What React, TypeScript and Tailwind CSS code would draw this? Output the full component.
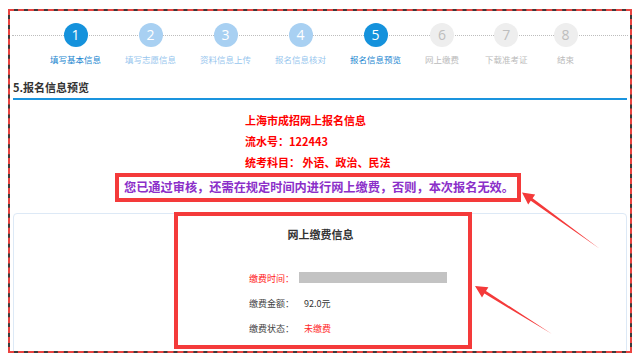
import React from "react";

const steps = [
  { n: "1", label: "填写基本信息", state: "active" },
  { n: "2", label: "填写志愿信息", state: "done" },
  { n: "3", label: "资料信息上传", state: "done" },
  { n: "4", label: "报名信息核对", state: "done" },
  { n: "5", label: "报名信息预览", state: "active" },
  { n: "6", label: "网上缴费", state: "todo" },
  { n: "7", label: "下载准考证", state: "todo" },
  { n: "8", label: "结束", state: "todo" },
];

const circleCls: Record<string, string> = {
  active: "bg-[#1592dc] text-white",
  done: "bg-[#a8d0f2] text-white",
  todo: "bg-[#eeeeee] text-[#bdbdbd]",
};
const labelCls: Record<string, string> = {
  active: "text-[#1a86d0]",
  done: "text-[#97c6ee]",
  todo: "text-[#bbbbbb]",
};

export default function App() {
  const cjk = { fontFamily: '"Noto Sans CJK SC", "Noto Sans", sans-serif' };
  return (
    <div className="relative w-[640px] h-[359px] bg-white overflow-hidden pt-[9px] pl-[8px]" style={cjk}>
      <div className="w-[624px] h-[344px] border-2 border-dashed border-[#ea4340] bg-[#3c3c3c]">
        <div className="h-full bg-white overflow-hidden px-[3px]">
          {/* stepper */}
          <div className="relative pt-[12px]">
            <div className="absolute top-[24px] left-[-1px] right-[-1px] border-t border-dotted border-[#bdbdbd]" />
            <div className="relative flex gap-[24px] pl-[37px]">
              {steps.map((s, i) => (
                <div key={s.n} className={`flex flex-col items-center ${i >= 6 ? "ml-[2px]" : ""}`}>
                  <div
                    className={`w-[24px] h-[24px] rounded-full flex items-center justify-center text-[14px] leading-none ${circleCls[s.state]}`}
                    style={{ fontFamily: '"Open Sans", sans-serif' }}
                  >
                    {s.n}
                  </div>
                  <div className={`mt-[6px] text-[8.5px] leading-[12px] whitespace-nowrap ${labelCls[s.state]}`}>{s.label}</div>
                </div>
              ))}
            </div>
          </div>

          {/* heading */}
          <div className="mt-[15px] pb-[4px] border-b-2 border-[#1a94de] text-[11px] leading-[14px] font-bold text-[#333]">
            5.报名信息预览
          </div>

          {/* red info */}
          <div className="mt-[10px] pl-[232px] text-[11px] leading-[21px] font-bold text-[#ff0000]">
            <div>上海市成招网上报名信息</div>
            <div>流水号：122443</div>
            <div>统考科目： 外语、政治、民法</div>
          </div>

          {/* purple notice box */}
          <div className="ml-[102px] w-[406px] h-[29px] border-4 border-[#f43a3a] flex items-center pl-[5px]">
            <span className="text-[12.2px] font-bold text-[#8b2fc9] whitespace-nowrap">
              您已通过审核，还需在规定时间内进行网上缴费，否则，本次报名无效。
            </span>
          </div>

          {/* panel */}
          <div className="mt-[11px] h-[150px] border border-[#dde9f6] rounded-[4px]">
            <div className="-mt-[2px] ml-[160px] w-[298px] h-[137px] border-4 border-[#f43a3a] bg-white">
              <div className="pt-[10px] pr-[5px] text-center text-[11px] leading-[16px] font-bold text-[#333]">网上缴费信息</div>
              <div className="mt-[24px] pl-[71px] text-[9px] leading-[25px]">
                <div className="flex items-center">
                  <div className="w-[55px] text-[#ff1a1a]">缴费时间：</div>
                  <div className="-ml-[5px] w-[148px] h-[11px] bg-[#c3c3c3] -mt-[3px]" />
                </div>
                <div className="flex">
                  <div className="w-[55px] text-[#444]">缴费金额：</div>
                  <div className="text-[#333]">92.0元</div>
                </div>
                <div className="flex">
                  <div className="w-[55px] text-[#444]">缴费状态：</div>
                  <div className="text-[#ff2a2a]">未缴费</div>
                </div>
              </div>
            </div>
          </div>
        </div>
      </div>

      {/* annotation arrows */}
      <svg className="absolute left-0 top-0 pointer-events-none" width="640" height="359" viewBox="0 0 640 359">
        <polygon points="600,249 532.6,198.3 535.2,194.6 522,192.5 528.2,204.4 530.8,200.7" fill="#f43a3a" />
        <polygon points="552,334 486,291 488.4,287.2 475,286 482,297.4 484.4,293.6" fill="#f43a3a" />
      </svg>
    </div>
  );
}
